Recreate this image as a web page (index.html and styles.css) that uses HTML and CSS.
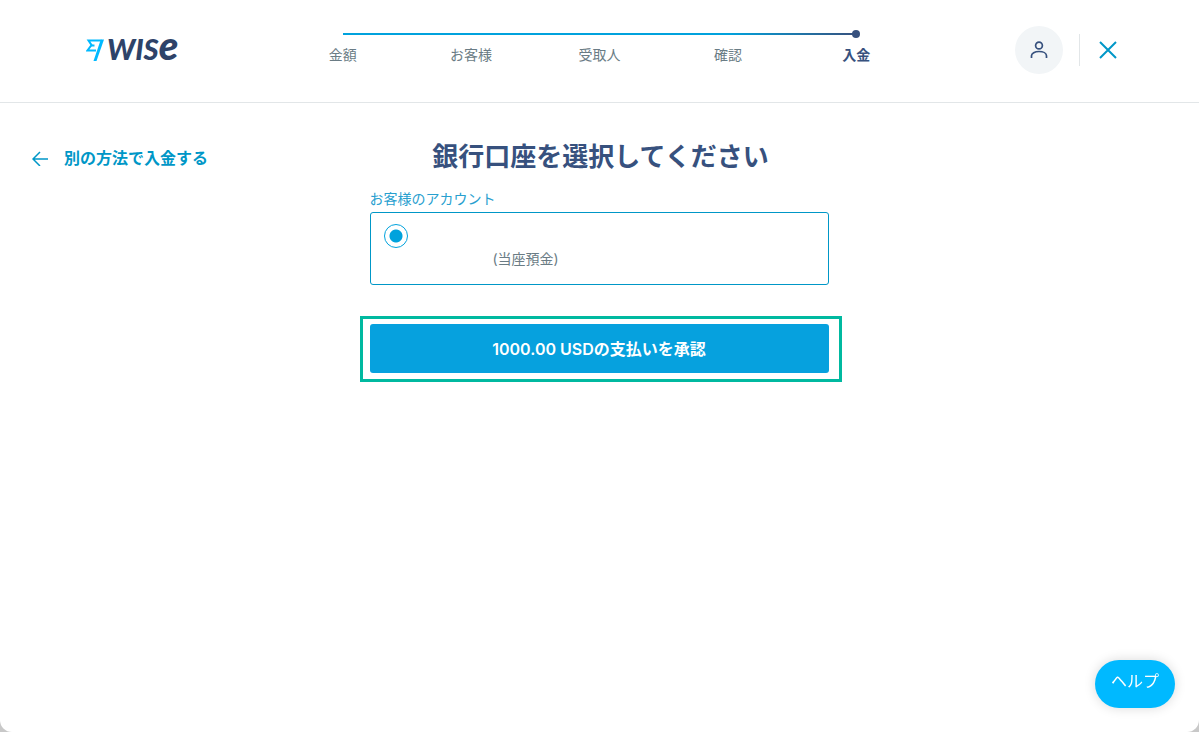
FILE: index.html
```
<!DOCTYPE html>
<html lang="ja">
<head>
  <meta charset="UTF-8" />
  <meta name="viewport" content="width=device-width, initial-scale=1.0" />
  <title>銀行口座を選択してください - Wise</title>
  <link rel="stylesheet" href="styles.css">
</head>
<body>
  <div class="page">
    <header class="header">
      <a class="logo" href="#" aria-label="Wise">
        <svg width="18" height="22" viewBox="0 0 18 22" fill="none" stroke="#00b9ff" stroke-width="2">
          <path d="M15.500 1.500H2.500L5.500 6 1.500 11.500H10" />
          <path d="M5 6.500H8.500" />
          <path d="M7.500 22H10.500L18 .5H14.800Z" fill="#00b9ff" stroke="none" />
        </svg>
        <span class="logo-text">WIS<span class="logo-e">e</span></span>
      </a>
      <ol class="steps">
        <li>金額</li>
        <li>お客様</li>
        <li>受取人</li>
        <li>確認</li>
        <li class="current">入金</li>
      </ol>
      <div class="actions">
        <button class="avatar" aria-label="アカウント">
          <svg width="24" height="24" viewBox="0 0 24 24" fill="none" stroke="#37517e" stroke-width="1.700">
            <circle cx="12" cy="7.500" r="3.400" />
            <path d="M4.500 20v-2.200c0-2.600 3.300-4.300 7.500-4.300s7.500 1.700 7.500 4.300V20" />
          </svg>
        </button>
        <button class="close" aria-label="閉じる">
          <svg width="18" height="18" viewBox="0 0 18 18" fill="none" stroke="#0097c7" stroke-width="2">
            <path d="M1 1 17 17M17 1 1 17" />
          </svg>
        </button>
      </div>
    </header>

    <main class="main">
      <a class="back" href="#">
        <svg width="16" height="16" viewBox="0 0 16 16" fill="none" stroke="#0097c7" stroke-width="1.500">
          <path d="M16 9H1M8 2 1 9l7 7" />
        </svg>
        別の方法で入金する
      </a>
      <form class="content">
        <h1>銀行口座を選択してください</h1>
        <fieldset>
          <legend>お客様のアカウント</legend>
          <label class="account">
            <input type="radio" name="account" checked>
            <span class="account-type">(当座預金)</span>
          </label>
        </fieldset>
        <div class="highlight">
          <button class="submit" type="button">1000.00 USDの支払いを承認</button>
        </div>
      </form>
    </main>

    <button class="help">ヘルプ</button>
  </div>
</body>
</html>
```
FILE: styles.css
```
* {
  box-sizing: border-box;
}
html {
  background: #c8c8c8;
}
body {
  margin: 0;
  font-family: Inter, "Noto Sans CJK JP", sans-serif;
  font-size: 14px;
  line-height: 24px;
  color: #6a7c85;
}
button {
  font-family: inherit;
  border: none;
  padding: 0;
  cursor: pointer;
}
a {
  text-decoration: none;
}
svg {
  display: block;
}
.page {
  min-height: 100vh;
  background: #fff;
  border-radius: 0 0 12px 12px;
}
.header {
  display: grid;
  grid-template-columns: 1fr 642px 1fr;
  align-items: start;
  padding: 26px 82px 28px;
  border-bottom: 1px solid #e2e6e8;
}
.logo {
  display: flex;
  align-items: center;
  gap: 3px;
  height: 48px;
  padding-left: 4px;
}
.logo-text {
  padding-bottom: 6px;
  font-family: Lato, sans-serif;
  font-size: 29px;
  font-weight: 900;
  font-style: italic;
  color: #2e4369;
}
.logo-e {
  font-size: 40px;
}
.steps {
  position: relative;
  display: flex;
  list-style: none;
  margin: 0;
  padding: 17px 0 0;
}
.steps li {
  flex: 1;
  text-align: center;
}
.steps::before {
  content: "";
  position: absolute;
  top: 7px;
  left: 10%;
  right: 10%;
  height: 2px;
  background: linear-gradient(to right, #00a2dd 75%, #37517e);
}
.steps .current {
  position: relative;
  font-weight: 700;
  color: #37517e;
}
.steps .current::before {
  content: "";
  position: absolute;
  top: -13px;
  left: 50%;
  width: 8px;
  height: 8px;
  margin-left: -4px;
  border-radius: 50%;
  background: #37517e;
}
.actions {
  display: flex;
  align-items: center;
  justify-content: flex-end;
}
.avatar {
  display: grid;
  place-items: center;
  width: 48px;
  height: 48px;
  border-radius: 50%;
  background: #f2f5f7;
}
.close {
  margin-left: 16px;
  padding: 7px 0 7px 19px;
  border-left: 1px solid #e2e6e8;
  background: none;
}
.main {
  display: grid;
  grid-template-columns: 1fr 482px 1fr;
  align-items: start;
  padding: 34px 30px 32px 32px;
}
.back {
  display: flex;
  align-items: center;
  gap: 16px;
  padding-top: 9px;
  font-size: 16px;
  font-weight: 700;
  color: #0097c7;
}
h1 {
  margin: 0 0 10px;
  font-size: 26px;
  line-height: 40px;
  font-weight: 700;
  text-align: center;
  color: #37517e;
}
fieldset {
  margin: 0 13px 31px 10px;
  padding: 0;
  border: none;
}
legend {
  padding: 0 0 1px;
  color: #28a0cf;
}
.account {
  display: block;
  height: 73px;
  padding: 11px 13px;
  border: 1px solid #0097c7;
  border-radius: 3px;
}
.account input {
  appearance: none;
  display: block;
  width: 24px;
  height: 24px;
  margin: 0;
  border: 1px solid #00a2dd;
  border-radius: 50%;
  background: radial-gradient(circle, #00a2dd 6px, transparent 7px);
}
.account-type {
  display: block;
  padding-left: 109px;
  line-height: 22px;
}
.highlight {
  padding: 5px 10px 6px 7px;
  border: 3px solid #00b9a0;
}
.submit {
  display: block;
  width: 100%;
  height: 49px;
  padding-bottom: 1px;
  border-radius: 3px;
  background: #06a1de;
  color: #fff;
  font-size: 16px;
  font-weight: 600;
}
.help {
  position: fixed;
  right: 24px;
  bottom: 24px;
  width: 80px;
  height: 48px;
  padding-bottom: 8px;
  border-radius: 24px;
  background: #00b9ff;
  box-shadow: 0 0 12px rgba(0, 0, 0, 0.15);
  color: #fff;
  font-size: 16px;
}
```
